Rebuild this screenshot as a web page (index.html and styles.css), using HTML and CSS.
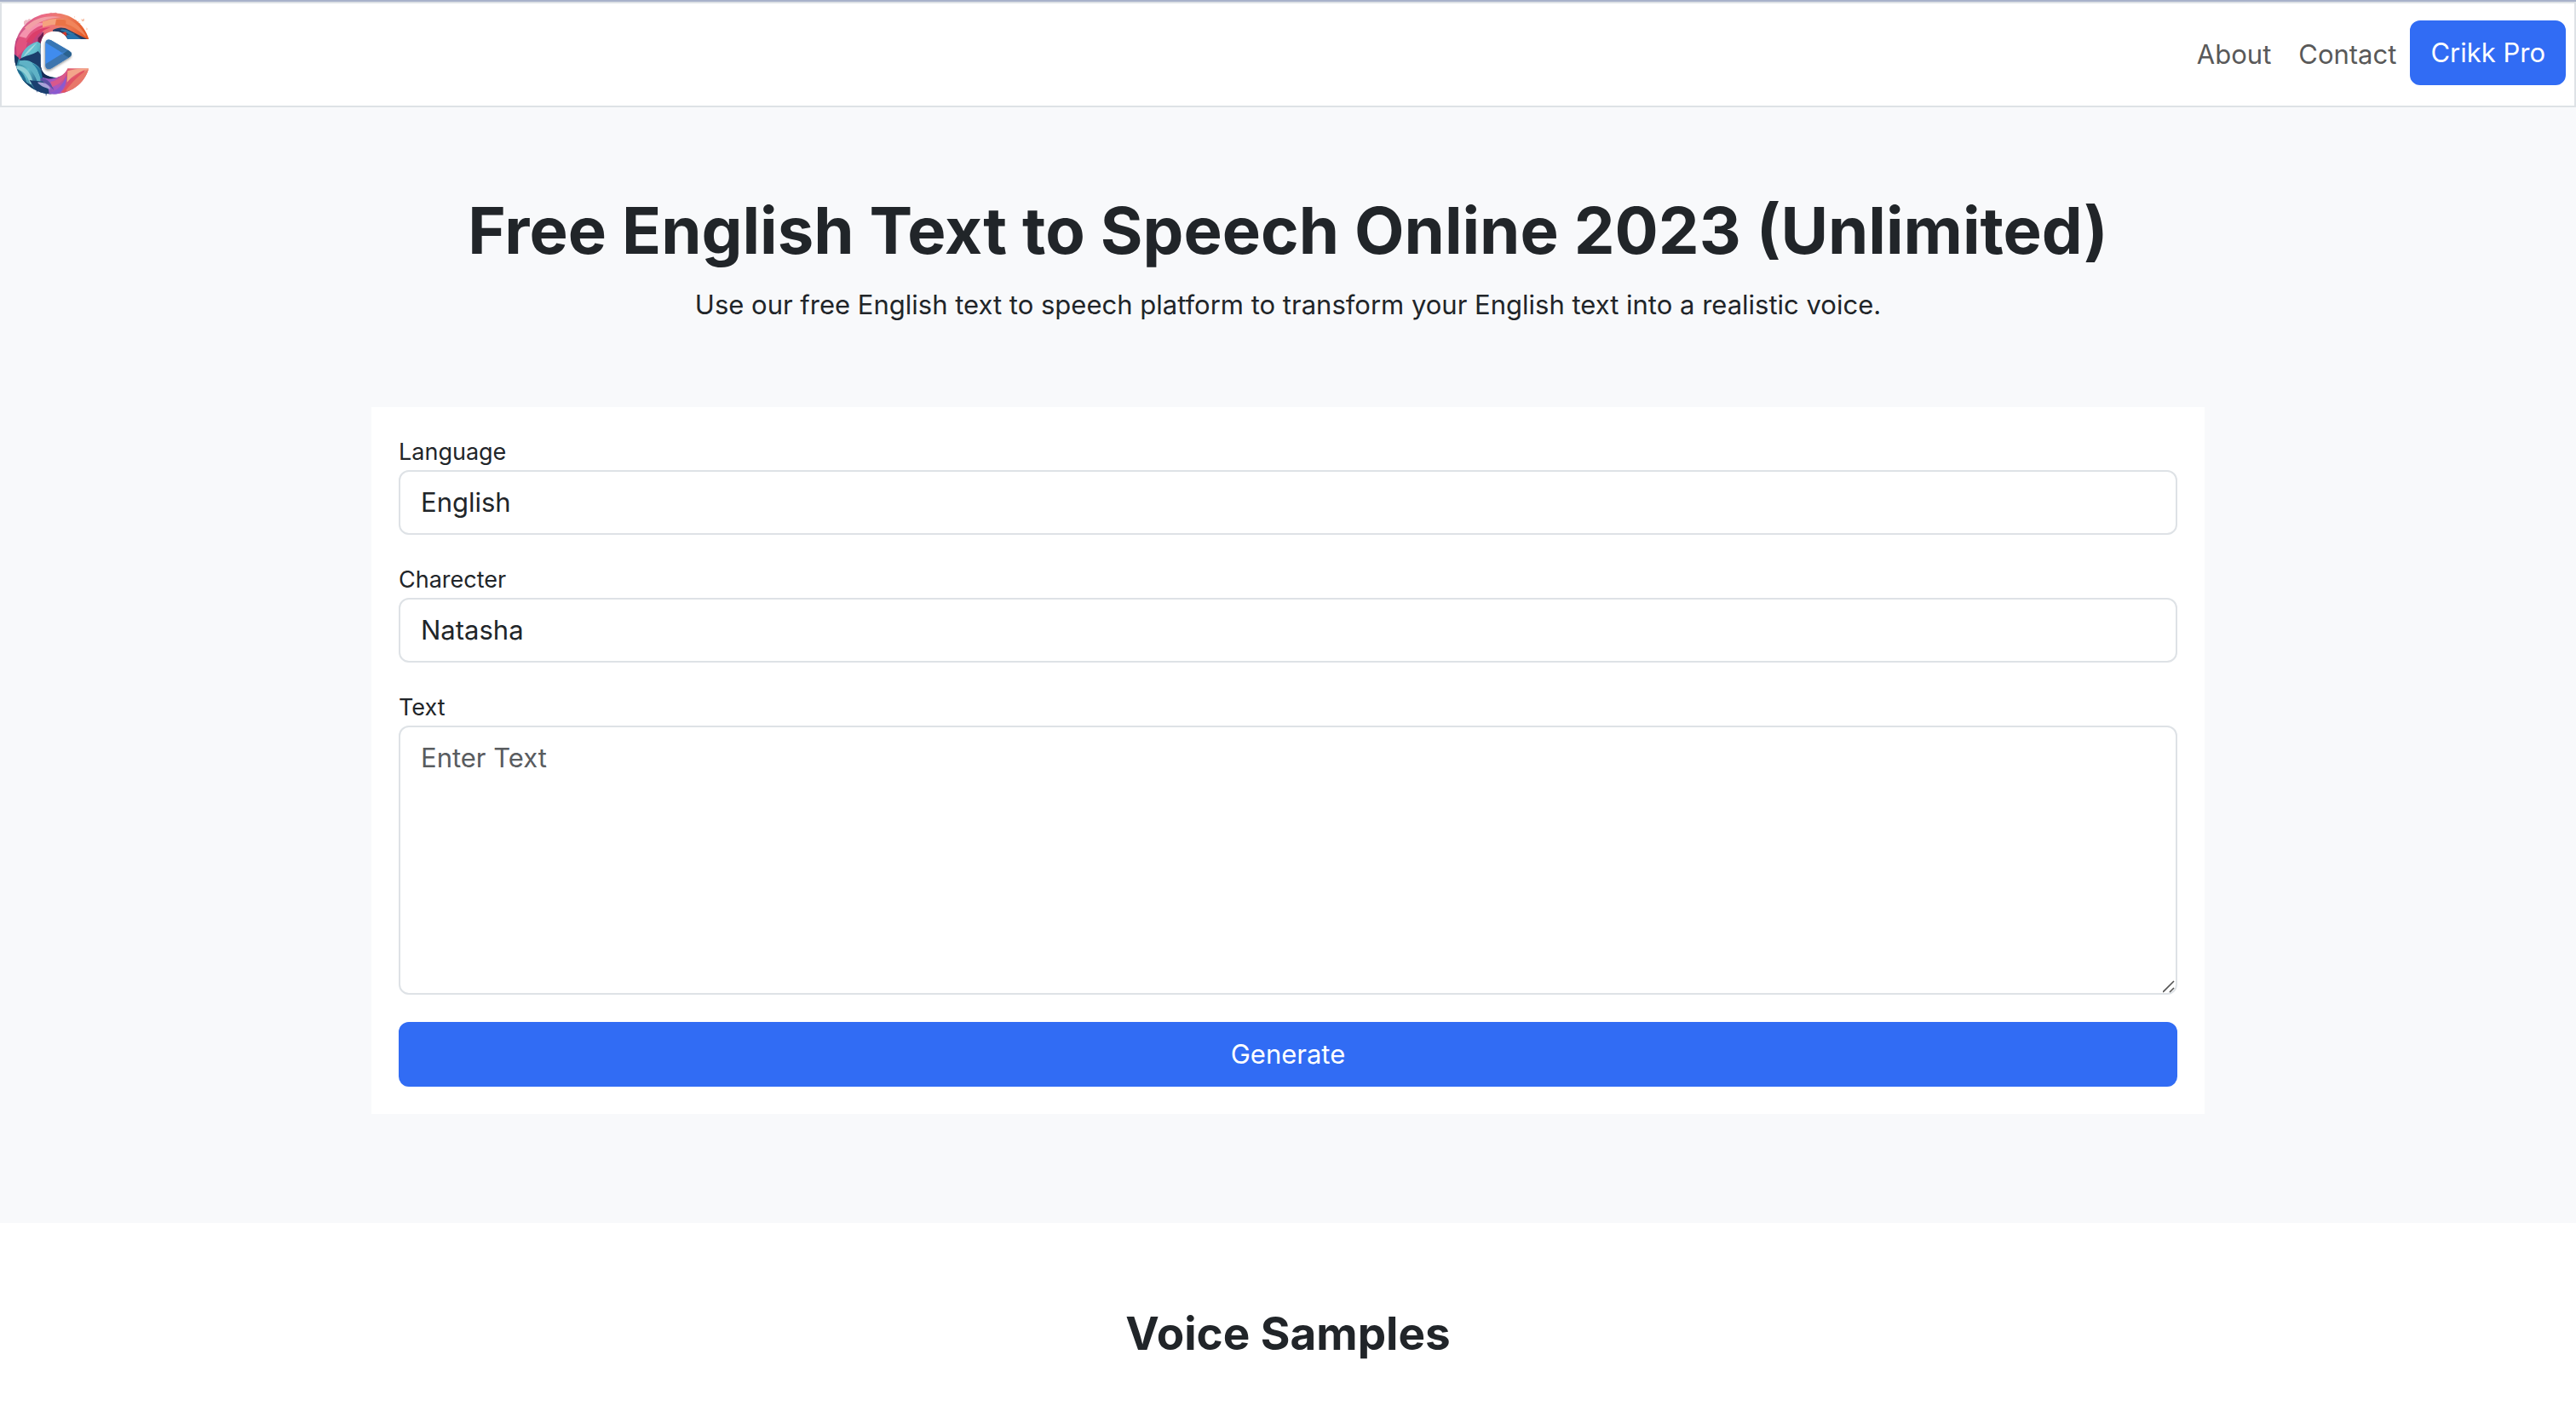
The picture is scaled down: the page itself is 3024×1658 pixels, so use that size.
FILE: index.html
```
<!DOCTYPE html>
<html lang="en">
<head>
  <meta charset="UTF-8">
  <meta name="viewport" content="width=device-width, initial-scale=1.0">
  <title>Free English Text to Speech Online 2023 (Unlimited)</title>
  <link rel="stylesheet" href="styles.css">
</head>
<body>
<header class="navbar">
  <a class="brand" href="#" aria-label="Crikk">
    <svg class="logo" viewBox="36 36 312 312" aria-hidden="true">
      <defs>
        <clipPath id="ring">
          <path d="M313 138C296 82 248 46 188 46C108 46 50 108 50 188C50 270 108 332 188 332C246 332 298 296 313 241H238C230 260 215 272 192 272C162 272 143 255 143 225V158C143 130 162 110 192 110C214 110 230 120 238 138Z"/>
        </clipPath>
        <linearGradient id="warm" x1="60" y1="60" x2="310" y2="120" gradientUnits="userSpaceOnUse">
          <stop offset="0" stop-color="#c9568f"/>
          <stop offset=".35" stop-color="#ec6a85"/>
          <stop offset=".65" stop-color="#ee8163"/>
          <stop offset="1" stop-color="#e2541f"/>
        </linearGradient>
        <linearGradient id="teal" x1="55" y1="220" x2="150" y2="260" gradientUnits="userSpaceOnUse">
          <stop offset="0" stop-color="#2b7f9c"/>
          <stop offset=".5" stop-color="#62bccb"/>
          <stop offset="1" stop-color="#1f5b86"/>
        </linearGradient>
        <linearGradient id="dusk" x1="140" y1="320" x2="310" y2="240" gradientUnits="userSpaceOnUse">
          <stop offset="0" stop-color="#6a63bd"/>
          <stop offset=".3" stop-color="#a757c4"/>
          <stop offset=".6" stop-color="#dc4d6e"/>
          <stop offset="1" stop-color="#f19a80"/>
        </linearGradient>
        <filter id="shade" x="-20%" y="-20%" width="140%" height="150%">
          <feDropShadow dx="-2" dy="5" stdDeviation="4" flood-opacity=".45"/>
        </filter>
        <clipPath id="tri">
          <path id="play" d="M160 153C160 141 169 136 180 142L244 179C255 186 255 195 244 202L182 240C171 247 160 242 160 230Z"/>
        </clipPath>
      </defs>
      <!-- paint splashes around the ring -->
      <g fill="#f7bfa6">
        <path d="M254 70l4-4 5 5 5-2 3 6 8-1-3 6 8 1-3 5 6 4-8 4z"/>
        <path d="M284 66l5 3 8-4-1 9-6 2zM305 97l4 6-5 3zM262 57l3 3-4 2z"/>
        <path d="M84 88l0-12 7-6 6 1 5-5 7 2-12 15z" fill="#efb9c4"/>
        <path d="M172 47l8-3 5 2 12-2 6 4z" fill="#e98b91"/>
      </g>
      <path d="M128 318l2 8 3-8zM156 326l4 2 2 12 3-11 5-1z" fill="#39598c"/>
      <g clip-path="url(#ring)">
        <path d="M40 36h290v120H36z" fill="url(#warm)"/>
        <path d="M40 140L150 110V240H40z" fill="#c2447f"/>
        <path d="M56 160C70 112 110 80 172 88C140 96 100 120 92 168L60 200z" fill="#e0527f"/>
        <path d="M68 128C92 88 130 72 190 84C150 82 112 98 92 134z" fill="#f493ae"/>
        <path d="M86 98C120 62 166 52 216 60C172 64 130 76 100 108z" fill="#f2a0a6"/>
        <path d="M92 148C110 112 138 98 178 96C150 106 124 124 112 152z" fill="#db3e6a"/>
        <path d="M150 76C200 58 240 64 276 96C240 84 196 80 150 96z" fill="#f5a37e"/>
        <path d="M198 68C242 62 282 90 306 128C274 102 236 88 194 90z" fill="#ea7346"/>
        <path d="M232 64C266 76 292 104 304 132C282 110 258 92 232 84z" fill="#f1855b"/>
        <path d="M186 106C206 94 226 96 240 104L278 124L316 142H236C228 120 212 110 186 110z" fill="#243d65"/>
        <path d="M214 104C234 100 250 114 264 120L250 124C236 118 224 110 214 108z" fill="#2f78a6"/>
        <path d="M232 122L260 120L286 138H238z" fill="#2673ad"/>
        <path d="M212 118L232 112L236 126L222 124z" fill="#d63b2c"/>
        <path d="M134 134L154 112L150 164L132 176z" fill="#6b2050"/>
        <path d="M46 190L72 212L132 146L154 160V262L204 276L160 340H40z" fill="url(#teal)"/>
        <path d="M44 186L66 204L58 232L46 230z" fill="#173a63"/>
        <path d="M74 204C78 178 96 158 132 146C132 166 128 182 116 190L98 196L80 210z" fill="#67bfd0"/>
        <path d="M82 202C98 188 112 176 130 150C118 162 96 174 82 202z" fill="#a7d9dd"/>
        <path d="M70 208C92 194 116 194 134 180L146 196L148 250C134 226 110 214 70 214z" fill="#1b3d6b"/>
        <path d="M70 214C108 206 128 226 136 258L150 284L132 290C120 254 100 232 66 226z" fill="#5fb2c6"/>
        <path d="M58 232C86 230 106 250 118 294L106 296C98 268 84 250 58 242z" fill="#8fcfd6"/>
        <path d="M52 240C72 246 90 264 96 298L84 292C78 270 68 256 54 250z" fill="#236d92"/>
        <path d="M112 222C134 232 142 250 152 272L142 276C138 254 128 236 112 222z" fill="#2379a2"/>
        <path d="M62 262C74 274 88 292 108 298L136 330L96 316z" fill="#164067"/>
        <path d="M104 282C124 286 140 284 154 290L184 336L132 328z" fill="#1b3f70"/>
        <path d="M142 226C150 250 164 266 190 272L176 284L150 276z" fill="#152b56"/>
        <path d="M150 272C186 286 216 272 238 240H320V300L220 340H170C180 312 158 296 150 284z" fill="url(#dusk)"/>
        <path d="M132 290C152 288 172 296 178 314C160 310 144 304 132 290z" fill="#a9a2d8"/>
        <path d="M142 276C164 274 180 290 190 318C174 300 160 290 142 284z" fill="#5b51a3"/>
        <path d="M176 328C208 316 224 292 234 266C236 296 222 322 196 334z" fill="#8a5ad0"/>
        <path d="M178 288C206 284 224 262 238 246C234 272 216 296 184 306z" fill="#d8588c"/>
        <path d="M214 326C238 302 252 270 300 242C290 276 262 306 228 326z" fill="#e25362"/>
        <path d="M232 318C256 290 278 262 313 244C304 284 272 310 240 324z" fill="#e8776a"/>
        <path d="M238 250C260 244 284 240 312 242C280 250 252 270 236 290z" fill="#f3a58a"/>
      </g>
      <g filter="url(#shade)">
        <use href="#play" fill="#3a7cc2"/>
        <g clip-path="url(#tri)">
          <path d="M156 136L222 190L160 246z" fill="#3f8cee"/>
          <path d="M150 130H210L260 176L216 184L160 150z" fill="#3776b4"/>
          <path d="M222 190L240 176L260 190L240 206z" fill="#2a628f"/>
          <path d="M160 226L218 190L246 204L180 250H150z" fill="#3d74ae"/>
        </g>
      </g>
    </svg>
  </a>
  <nav>
    <ul class="nav-list">
      <li><a class="nav-link" href="#">About</a></li>
      <li><a class="nav-link" href="#">Contact</a></li>
      <li><a class="btn" href="#">Crikk Pro</a></li>
    </ul>
  </nav>
</header>
<main>
  <section class="hero">
    <h1>Free English Text to Speech Online 2023 (Unlimited)</h1>
    <p>Use our free English text to speech platform to transform your English text into a realistic voice.</p>
    <form class="card">
      <div class="field">
        <label for="language">Language</label>
        <select class="form-control" id="language">
          <option>English</option>
        </select>
      </div>
      <div class="field">
        <label for="character">Charecter</label>
        <select class="form-control" id="character">
          <option>Natasha</option>
        </select>
      </div>
      <div class="field">
        <label for="text">Text</label>
        <textarea class="form-control" id="text" rows="6" placeholder="Enter Text"></textarea>
      </div>
      <button class="btn" type="button">Generate</button>
    </form>
  </section>
  <section class="samples">
    <h2>Voice Samples</h2>
  </section>
</main>
</body>
</html>
```
FILE: styles.css
```
:root {
  --primary: #316cf4;
  --text: #212529;
  --border: #dee2e6;
  --light: #f8f9fb;
}
* {
  margin: 0;
  padding: 0;
  box-sizing: border-box;
}
body {
  border-top: 2px solid #a8b2ca;
  background-color: #fff;
  color: var(--text);
  font-family: Inter, 'Liberation Sans', sans-serif;
  font-size: 31px;
  line-height: 48px;
}
a {
  text-decoration: none;
}
/* navbar */
.navbar {
  display: flex;
  align-items: center;
  justify-content: space-between;
  padding: 8px 10px;
  border: 2px solid var(--border);
}
.brand,
.logo {
  display: block;
}
.logo {
  width: 104px;
  height: 104px;
}
.nav-list {
  display: flex;
  list-style: none;
}
.nav-link {
  display: block;
  padding: 16px;
  color: #595959;
}
.btn {
  display: block;
  padding: 12px 22px;
  border: 2px solid var(--primary);
  border-radius: 12px;
  background-color: var(--primary);
  color: #fff;
  font: inherit;
  text-align: center;
  cursor: pointer;
}
/* hero */
.hero {
  padding: 96px 24px 128px;
  background-color: var(--light);
  text-align: center;
}
h1 {
  margin-bottom: 16px;
  font-size: 76px;
  line-height: 96px;
}
.card {
  display: flex;
  flex-direction: column;
  gap: 32px;
  max-width: 2152px;
  margin: 96px auto 0;
  padding: 32px;
  background-color: #fff;
  text-align: left;
}
.field label {
  display: block;
  font-size: 27px;
  line-height: 42px;
}
.form-control {
  display: block;
  width: 100%;
  padding: 12px 24px;
  border: 2px solid var(--border);
  border-radius: 12px;
  background-color: #fff;
  color: var(--text);
  font: inherit;
  appearance: none;
}
textarea.form-control {
  resize: vertical;
}
.form-control::placeholder {
  color: #595c5f;
}
.form-control::-webkit-resizer {
  background: url("data:image/svg+xml,%3Csvg xmlns='http://www.w3.org/2000/svg' width='15' height='15'%3E%3Cpath d='M0 14L13 1M8 14L13 9' stroke='%23555' stroke-width='1.6'/%3E%3C/svg%3E") no-repeat;
}
/* samples */
.samples {
  padding: 96px 24px;
  text-align: center;
}
h2 {
  font-size: 53px;
  line-height: 68px;
}
```
